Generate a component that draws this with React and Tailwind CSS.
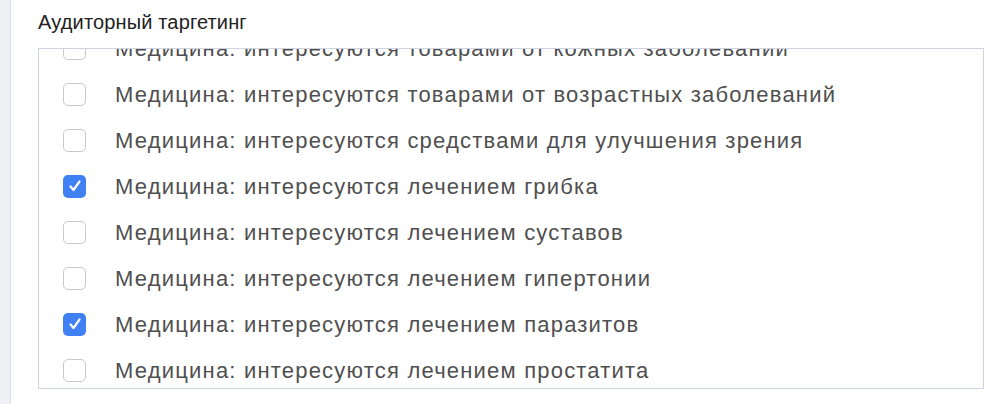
import React from "react";

const items = [
  { label: "Медицина: интересуются товарами от кожных заболеваний", checked: false },
  { label: "Медицина: интересуются товарами от возрастных заболеваний", checked: false },
  { label: "Медицина: интересуются средствами для улучшения зрения", checked: false },
  { label: "Медицина: интересуются лечением грибка", checked: true },
  { label: "Медицина: интересуются лечением суставов", checked: false },
  { label: "Медицина: интересуются лечением гипертонии", checked: false },
  { label: "Медицина: интересуются лечением паразитов", checked: true },
  { label: "Медицина: интересуются лечением простатита", checked: false },
];

const Checkbox = ({ checked }) =>
  checked ? (
    <span className="flex h-[23px] w-[23px] shrink-0 items-center justify-center rounded-[5px] bg-[#3f80f3]">
      <svg width="16" height="16" viewBox="0 0 16 16" fill="none">
        <path d="M3.5 8.5 L6.5 12 L12.5 3.5" stroke="white" strokeWidth="2.2" strokeLinecap="round" strokeLinejoin="round" />
      </svg>
    </span>
  ) : (
    <span className="h-[23px] w-[23px] shrink-0 rounded-[5px] border border-[#c9c9c9] bg-white" />
  );

const App = () => {
  return (
    <div className="flex h-[404px] w-[1000px] bg-white font-['Liberation_Sans',Arial,sans-serif]">
      <div className="w-[11px] shrink-0 border-r border-[#dde0e7] bg-[#eef0f5]" />
      <div className="flex-1 pl-[27px]">
        <div className="h-[48px] pt-[9px] text-[20px] leading-[26px] tracking-[0.15px] text-[#222]">
          Аудиторный таргетинг
        </div>
        <div className="h-[341px] w-[946px] overflow-hidden border border-[#cfd3e0]">
          <div className="-mt-[24px]">
            {items.map((item) => (
              <div key={item.label} className="flex h-[46px] items-center pl-[24px]">
                <Checkbox checked={item.checked} />
                <span className="ml-[29px] text-[22px] tracking-[1.2px] text-[#4f4f4f]">{item.label}</span>
              </div>
            ))}
          </div>
        </div>
      </div>
    </div>
  );
};

export default App;
